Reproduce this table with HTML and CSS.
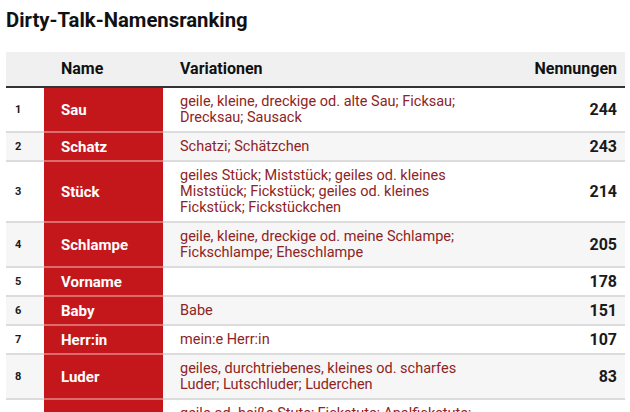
FILE: index.html
```html
<!DOCTYPE html>
<html lang="de">
<head>
<meta charset="utf-8">
<link rel="stylesheet" href="styles.css">
</head>
<body>
<h1 class="title">Dirty-Talk-Namensranking</h1>
<table class="rank">
  <colgroup>
    <col class="w-rank"><col class="w-name"><col class="w-var"><col class="w-num">
  </colgroup>
  <thead>
    <tr><th class="c-rank"></th><th class="c-name">Name</th><th class="c-var">Variationen</th><th class="c-num">Nennungen</th></tr>
  </thead>
  <tbody>
    <tr><td class="c-rank">1</td><td class="c-name">Sau</td><td class="c-var">geile, kleine, dreckige od. alte Sau; Ficksau; Drecksau; Sausack</td><td class="c-num">244</td></tr>
    <tr><td class="c-rank">2</td><td class="c-name">Schatz</td><td class="c-var">Schatzi; Schätzchen</td><td class="c-num">243</td></tr>
    <tr><td class="c-rank">3</td><td class="c-name">Stück</td><td class="c-var">geiles Stück; Miststück; geiles od. kleines Miststück; Fickstück; geiles od. kleines Fickstück; Fickstückchen</td><td class="c-num">214</td></tr>
    <tr><td class="c-rank">4</td><td class="c-name">Schlampe</td><td class="c-var">geile, kleine, dreckige od. meine Schlampe; Fickschlampe; Eheschlampe</td><td class="c-num">205</td></tr>
    <tr><td class="c-rank">5</td><td class="c-name">Vorname</td><td class="c-var"></td><td class="c-num">178</td></tr>
    <tr><td class="c-rank">6</td><td class="c-name">Baby</td><td class="c-var">Babe</td><td class="c-num">151</td></tr>
    <tr><td class="c-rank">7</td><td class="c-name">Herr:in</td><td class="c-var">mein:e Herr:in</td><td class="c-num">107</td></tr>
    <tr><td class="c-rank">8</td><td class="c-name">Luder</td><td class="c-var">geiles, durchtriebenes, kleines od. scharfes Luder; Lutschluder; Luderchen</td><td class="c-num">83</td></tr>
    <tr><td class="c-rank">9</td><td class="c-name">Stute</td><td class="c-var">geile od. heiße Stute; Fickstute; Analfickstute; Zuchtstute</td><td class="c-num">74</td></tr>
  </tbody>
</table>
</body>
</html>
```
FILE: styles.css
```css
html, body {
  margin: 0;
  padding: 0;
  background: #ffffff;
  font-family: Roboto, "Liberation Sans", sans-serif;
  color: #1a1a1a;
  overflow: hidden;
  height: 412px;
}
body {
  padding: 0 5px 0 6px;
}
.title {
  margin: 0;
  padding-top: 8px;
  height: 52px;
  box-sizing: border-box;
  font-size: 20.3px;
  line-height: 24px;
  font-weight: 700;
  color: #111;
}
.rank {
  width: 619px;
  table-layout: fixed;
  border-collapse: collapse;
  font-size: 14.5px;
  line-height: 16px;
}
.w-rank { width: 38px; }
.w-name { width: 119px; }
.w-var { width: 327px; }
.w-num { width: 135px; }
.rank th {
  background: #f0f0f0;
  font-weight: 700;
  font-size: 16px;
  text-align: left;
  height: 34px;
  padding: 0 8px 0 17px;
  border-bottom: 2px solid #333;
  color: #111;
}
.rank td {
  padding: 6px 10px 5px 17px;
  border-bottom: 2px solid #dcdcdc;
  vertical-align: middle;
}
.rank tbody tr:nth-child(even) td {
  background: #f6f6f6;
}
.rank .c-rank {
  padding-left: 9px;
  padding-right: 0;
  font-size: 11px;
  font-weight: 700;
}
.rank td.c-name {
  background: #c4171c;
  color: #ffffff;
  font-weight: 700;
  font-size: 15px;
  border-bottom-color: #dc6b6d;
}
.rank tbody tr:nth-child(even) td.c-name {
  background: #c4171c;
}
.rank td.c-var {
  color: #8e2424;
}
.rank .c-num {
  text-align: right;
  font-weight: 700;
  padding-left: 0;
  padding-right: 8px;
}
.rank td.c-num {
  font-size: 16px;
}
```
